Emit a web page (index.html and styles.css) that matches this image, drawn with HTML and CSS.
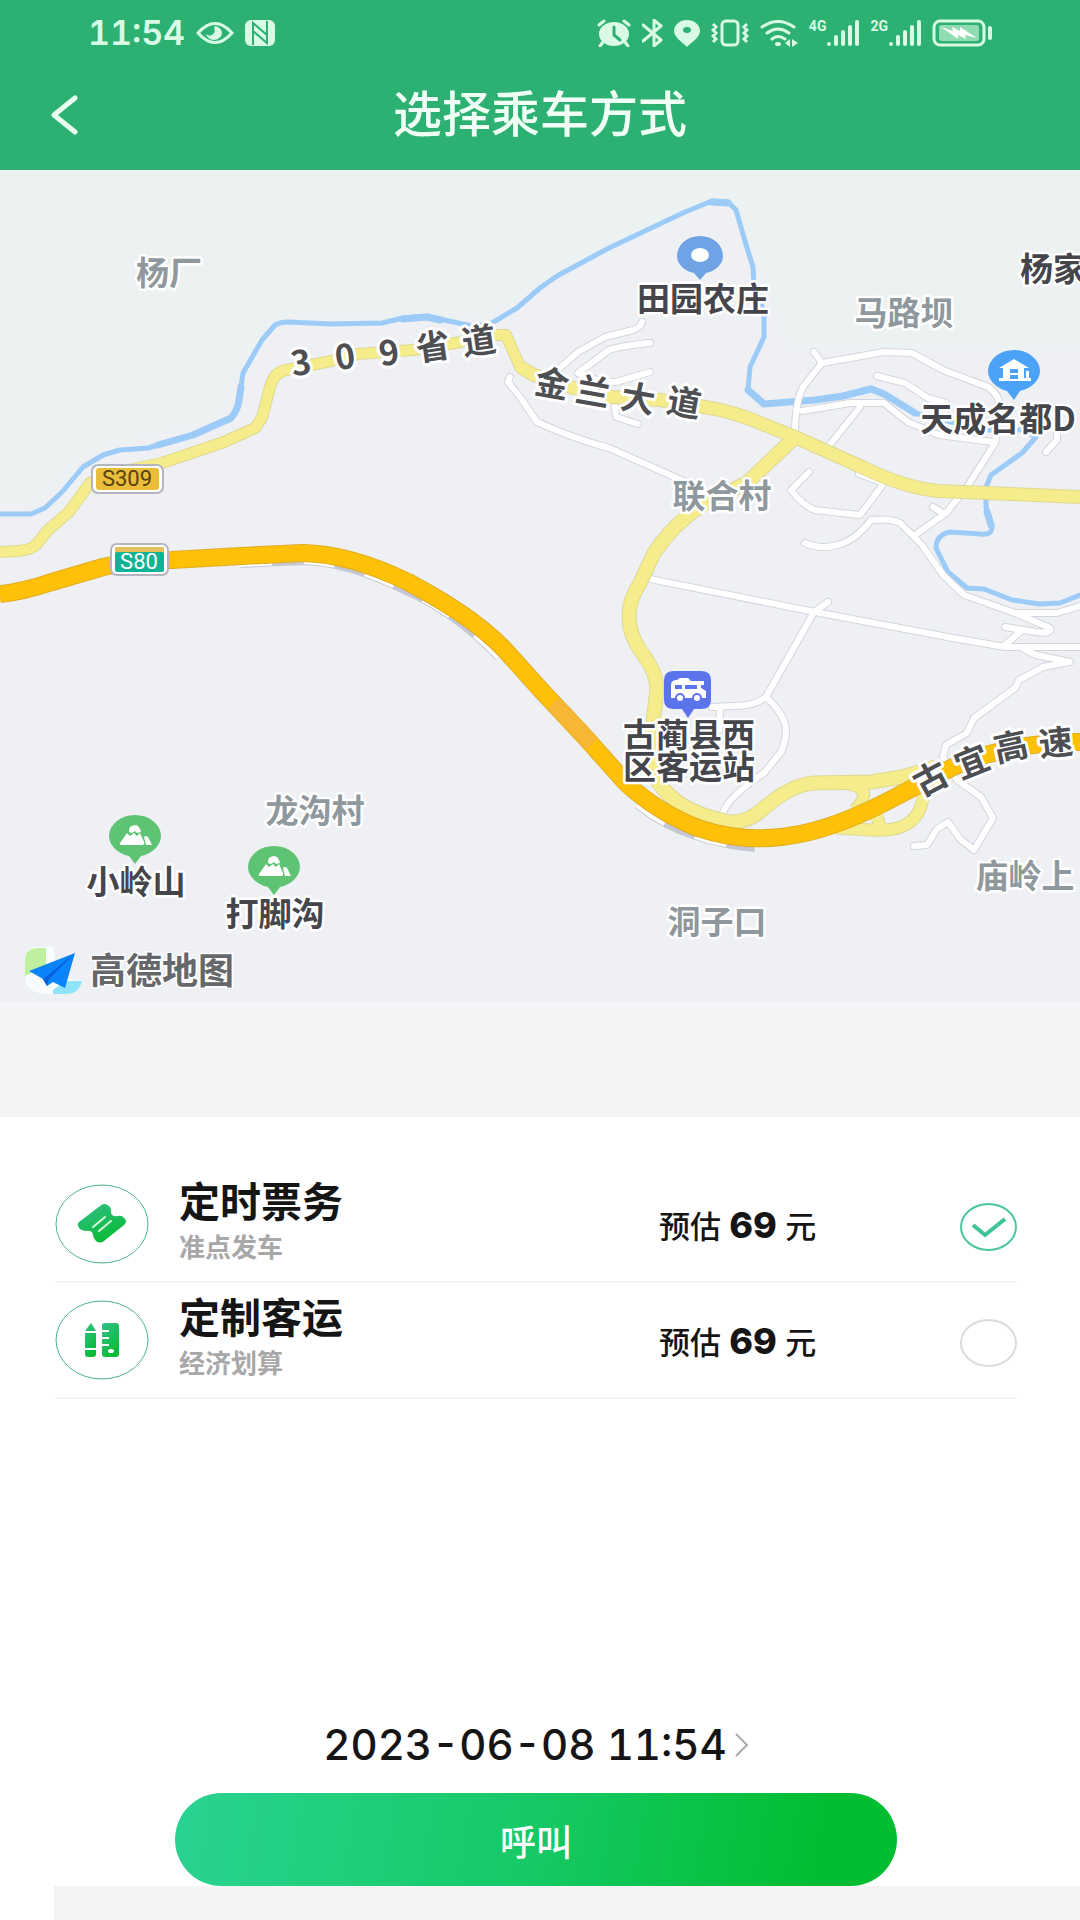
FILE: index.html
```html
<!DOCTYPE html>
<html lang="zh-CN">
<head>
  <meta charset="UTF-8" />
  <meta name="viewport" content="width=device-width, initial-scale=1.0"/>
  <title>选择乘车方式</title>
  <link rel="stylesheet" href="styles.css">
</head>
<body>
  <!-- Header -->
  <header class="header">
    <div class="status-bar">
      <div class="status-left">
        <span class="clock">11:54</span>
        <svg width="38" height="22" viewBox="0 0 38 22"><path d="M2 11Q19-8 36 11Q19 30 2 11Z" fill="none" stroke="#d9fbe5" stroke-width="3"/><path d="M19 4a8 7 0 1 1-9 8q4 3 7 0t1-6z" fill="#d9fbe5"/></svg>
        <svg width="30" height="26" viewBox="0 0 30 26"><rect width="30" height="26" rx="6" fill="#d9fbe5"/><path d="M8 25V3l14 12V7M22 1v22L8 11v8" fill="none" stroke="#2cb172" stroke-width="2"/></svg>
      </div>
      <div class="status-right">
        <!-- alarm -->
        <svg width="34" height="28" viewBox="0 0 34 28"><ellipse cx="17" cy="15" rx="15" ry="12" fill="#d9fbe5"/><path d="M2 6l5-4M32 6l-5-4M6 23l-3 4M28 23l3 4" stroke="#d9fbe5" stroke-width="3" stroke-linecap="round"/><path d="M17 8v8l6 5" fill="none" stroke="#2cb172" stroke-width="3" stroke-linecap="round"/></svg>
        <!-- bluetooth -->
        <svg width="21" height="28" viewBox="0 0 21 28"><path d="M1 6l18 15-7 6V1l7 6L1 22" fill="none" stroke="#d9fbe5" stroke-width="3" stroke-linejoin="round" stroke-linecap="round"/></svg>
        <!-- location -->
        <svg width="26" height="28" viewBox="0 0 26 28"><path d="M13 28C8 23 0 18 0 12a13 11 0 0 1 26 0c0 6-8 11-13 16z" fill="#d9fbe5"/><ellipse cx="13" cy="11" rx="4" ry="3" fill="#2cb172"/></svg>
        <!-- vibrate -->
        <svg width="38" height="28" viewBox="0 0 38 28"><rect x="11" y="2" width="16" height="24" rx="4" fill="none" stroke="#d9fbe5" stroke-width="3"/><path d="M2 5l3 3-3 3 3 3-3 3 3 3-3 3M36 5l-3 3 3 3-3 3 3 3-3 3 3 3" fill="none" stroke="#d9fbe5" stroke-width="3"/></svg>
        <!-- wifi -->
        <svg width="38" height="28" viewBox="0 0 38 28"><path d="M2 8q16-11 32 0M7 14q11-8 22 0M12 20q6-5 13 0" fill="none" stroke="#d9fbe5" stroke-width="3" stroke-linecap="round"/><ellipse cx="18" cy="25" rx="3" ry="2" fill="#d9fbe5"/><path d="M30 20v8l-5-4zM32 20v8l6-4z" fill="#d9fbe5"/></svg>
        <span class="signal"><small>4G</small>
          <svg width="33" height="28" viewBox="0 0 33 28"><path d="M3 25v0M10 18v7M17 13v12M24 8v17M31 3v22" stroke="#d9fbe5" stroke-width="4" stroke-linecap="round"/></svg>
        </span>
        <span class="signal"><small>2G</small>
          <svg width="33" height="28" viewBox="0 0 33 28"><path d="M3 25v0M10 18v7M17 13v12M24 8v17M31 3v22" stroke="#d9fbe5" stroke-width="4" stroke-linecap="round"/></svg>
        </span>
        <!-- battery -->
        <svg width="60" height="28" viewBox="0 0 60 28"><rect x="2" y="2" width="50" height="24" rx="6" fill="none" stroke="#d9fbe5" stroke-width="3"/><rect x="7" y="6" width="40" height="16" rx="2" fill="#8edcaf"/><path d="M9 8l12 4-1-4 8 4v-4l17 11-12-3 1 4-8-4v4z" fill="#fff"/><path d="M58 9v10" stroke="#d9fbe5" stroke-width="4" stroke-linecap="round"/></svg>
      </div>
    </div>
    <div class="title-bar">
      <button class="back-btn" type="button" aria-label="返回">
        <svg width="27" height="40" viewBox="0 0 27 40"><path d="M24 3L3 20L24 37" fill="none" stroke="#e9fff0" stroke-width="5" stroke-linecap="round" stroke-linejoin="round"/></svg>
      </button>
      <h1>选择乘车方式</h1>
    </div>
  </header>

  <!-- Map -->
  <section class="map">
    <svg viewBox="0 170 1080 832" role="img" aria-label="高德地图">
      <defs>
        <g id="mountain-pin">
          <path d="M0 28L-6 20C-17 18-26 9-26 0A26 21 0 0 1 26 0C26 9 17 18 6 20Z" fill="#5ec474"/>
          <path d="M-6-4Q-6-10-3-10Q0-12 3-10Q5-8 6-4L2-3L0-5L-3-3ZM-15 7L-8-3L-5 0L-1-3L2 0L5-3L9 6Q10 9 7 9H-13Q-16 9-15 7ZM9 1Q11-1 13 1L17 9H11Z" fill="#fff"/>
        </g>
        <g id="local-roads">
          <path d="M510 377L508 382L520 397L537 422Q572 438 609 448L643 463L690 484"/>
          <path d="M561 367L578 352L605 337L633 330Q641 327 642 322"/>
          <path d="M578 373L609 350Q620 346 650 343M578 373Q600 383 616 382L650 372"/>
          <path d="M614 400L616 417L638 424"/>
          <path d="M814 352L822 363L803 387Q795 402 795 436"/>
          <path d="M822 363L884 352L912 353L943 370L988 387Q1002 397 1000 412T995 443L967 487L946 513L915 535"/>
          <path d="M877 376L905 383L928 398L946 403"/>
          <path d="M802 411L850 403L884 403L908 422L939 435L993 442"/>
          <path d="M860 407L828 447M859 474L884 483L860 515L815 510Q802 505 791 490L809 472"/>
          <path d="M805 543Q820 550 838 545T871 520Q890 518 900 523L922 545L943 575L964 595L1015 613L1050 628Q1053 634 1036 632L1005 627"/>
          <path d="M1015 613L1057 613L1080 606M933 507L941 512M1057 433L1057 440L1046 452"/>
          <path d="M650 579L815 612L953 638L1005 647L1080 647"/>
          <path d="M828 602L814 612L766 697Q755 706 735 706L712 707M720 708L719 730"/>
          <path d="M766 697Q782 712 785 724T781 752L764 773Q728 797 723 813"/>
          <path d="M1020 632L1005 645M1022 648L1036 655L1070 662L1043 667L1019 680L1015 688L974 718L967 733L946 745L943 757L957 780L981 797L993 818L974 850L960 839L948 822L937 829L927 845L914 846"/>
        </g>
        <path id="s309-west" d="M0 552L17 551Q32 550 37 544L48 530L69 512L90 483L110 474L162 463L224 442L255 428L262 418L270 387Q274 372 286 370L331 361L358 354L413 350L461 342L482 335L506 335L520 367L534 375"/>
        <path id="s309-east" d="M520 367L534 375L574 388L612 397L660 400L705 407Q735 412 760 423L795 437L864 468Q905 488 939 491L988 493L1080 497"/>
        <path id="village-road" d="M795 437L747 483L705 503Q674 523 654 553L640 583Q629 600 629 616Q629 634 640 650Q657 672 657 690L652 730V767Q656 785 675 800T730 822Q748 823 764 808Q792 784 815 783L871 782L902 777L936 767"/>
        <path id="ramps" d="M840 783Q878 786 855 810M836 828L871 830Q897 832 910 822T924 790M875 811L880 826"/>
        <path id="railway" d="M240 560L303 557Q348 558 405 586C441 601 474 626 501 654M640 802Q665 822 696 832Q726 842 755 844"/>
        <path id="expressway" d="M0 594Q22 592 52 582L103 567Q130 561 172 560L241 556L303 553Q350 554 408 582C445 602 478 622 505 650L540 689L585 737L626 783Q657 812 698 828Q748 845 800 834Q836 827 884 803L953 767Q1010 742 1080 742"/>
      </defs>

      <rect y="170" width="1080" height="832" fill="#eef0f4"/>
      <path d="M0 170H1080V350H790L750 245L725 196L545 280L490 320L290 315L235 375L220 420L90 452L35 505H0Z" fill="#ecf1f2"/>

      <!-- river -->
      <g class="river">
        <path stroke-width="5" d="M0 514H31L45 508L62 492L83 467L103 455L120 450L148 448L193 435L231 418Q238 410 239 400L243 373L262 340L275 325Q280 322 289 322L331 324L382 323L403 318L427 316L444 320L472 326L492 323L517 308L540 288L557 276L609 248L685 212L712 201L728 202L736 210L747 248L753 267L754 283L764 313L764 337L750 367L748 390L764 404L815 400L843 396L871 388L884 393L915 413L984 430H1022L1036 437L1022 453L991 475L986 487V507L992 525Q993 536 980 534L950 532Q936 535 936 548L948 572L967 588L984 589L1012 600L1039 604L1060 603L1080 595"/>
        <path stroke-width="7" d="M158 445L193 435L231 418Q238 410 239 400L241 387M403 319L427 317L440 320M712 202L728 203M748 390L764 404L815 400L843 396L871 389L884 394L915 413M987 512L991 525"/>
      </g>

      <!-- roads, casing first -->
      <use href="#local-roads" class="road local-casing"/>
      <use href="#local-roads" class="road local"/>
      <g class="road yellow-casing">
        <use href="#s309-west" stroke-width="12"/>
        <use href="#s309-east" stroke-width="14"/>
        <use href="#village-road" stroke-width="15"/>
        <use href="#ramps" stroke-width="13"/>
      </g>
      <g class="road yellow">
        <use href="#s309-west" stroke-width="10"/>
        <use href="#s309-east" stroke-width="12"/>
        <use href="#village-road" stroke-width="13"/>
        <use href="#ramps" stroke-width="11"/>
      </g>
      <use href="#railway" class="rail"/>
      <use href="#railway" class="rail-dash"/>
      <use href="#expressway" class="road" stroke="#e0ac22" stroke-width="18"/>
      <use href="#expressway" class="road" stroke="#ffc107" stroke-width="16"/>
      <path d="M553 703L592 744" stroke="#f7b735" stroke-width="16"/>

      <!-- road shields -->
      <rect x="92" y="465" width="71" height="28" rx="6" fill="#fff" stroke="#b4b5c0" stroke-width="2"/>
      <rect x="96" y="468" width="63" height="22" rx="3" fill="#eabd3b"/>
      <text class="shield" x="127" y="486" fill="#59420e">S309</text>
      <rect x="111" y="544" width="57" height="31" rx="6" fill="#fff" stroke="#b4b5c0" stroke-width="2"/>
      <rect x="115" y="547" width="49" height="6" fill="#e5c15e"/>
      <rect x="115" y="552" width="49" height="20" rx="2" fill="#0fb295"/>
      <text class="shield" x="139" y="569" fill="#fff">S80</text>

      <!-- road names -->
      <g class="road-name">
        <text y="12" transform="translate(301 363) rotate(-8)">3</text>
        <text y="12" transform="translate(345 357) rotate(-8)">0</text>
        <text y="12" transform="translate(389 353) rotate(-8)">9</text>
        <text y="12" transform="translate(433 347) rotate(-8)">省</text>
        <text y="12" transform="translate(479 341) rotate(-8)">道</text>
        <text y="12" transform="translate(552 384) rotate(10)">金</text>
        <text y="12" transform="translate(593 392) rotate(10)">兰</text>
        <text y="12" transform="translate(638 399) rotate(10)">大</text>
        <text y="12" transform="translate(684 403) rotate(10)">道</text>
        <text y="12" transform="translate(931 779) rotate(-28)">古</text>
        <text y="12" transform="translate(972 762) rotate(-22)">宜</text>
        <text y="12" transform="translate(1011 747) rotate(-12)">高</text>
        <text y="12" transform="translate(1056 743) rotate(-6)">速</text>
      </g>

      <!-- village names -->
      <g class="place village">
        <text x="169" y="285">杨厂</text>
        <text x="904" y="325">马路坝</text>
        <text x="722" y="508">联合村</text>
        <text x="315" y="823">龙沟村</text>
        <text x="717" y="934">洞子口</text>
        <text x="1025" y="888">庙岭上</text>
      </g>

      <!-- points of interest -->
      <g class="place">
        <text x="703" y="311">田园农庄</text>
        <text x="1053" y="281">杨家</text>
        <text x="998" y="431">天成名都D</text>
        <text x="689" y="747">古蔺县西</text>
        <text x="689" y="779">区客运站</text>
        <text x="136" y="894">小岭山</text>
        <text x="275" y="926">打脚沟</text>
      </g>

      <path d="M700 280L694 273C684 271 677 264 677 256A23 20 0 0 1 723 256C723 264 716 271 706 273Z" fill="#6fa3e5"/>
      <ellipse cx="700" cy="255" rx="9" ry="7" fill="#fff"/>

      <path d="M1014 400L1007 391C996 388 988 380 988 371A26 21 0 0 1 1040 371C1040 380 1032 388 1020 391Z" fill="#4ba2f7"/>
      <path d="M999 368L1014 359L1029 368H1024V378H1026V371H1029V378H1031V381H999V378H1003V368Z" fill="#fff"/>
      <path d="M1010 369H1018V373H1010ZM1010 375H1018V379H1010Z" fill="#4ba2f7"/>

      <path d="M674 671H701Q711 671 711 680V700Q711 709 701 709H694L688 718L682 709H674Q664 709 664 700V680Q664 671 674 671Z" fill="#5b74ec"/>
      <path d="M671 685Q671 680 677 680L680 678H688L691 681H704V685H701V688L706 691V698H671Z" fill="#fff"/>
      <path d="M675 685H682V689H675ZM685 685H697V689H685Z" fill="#5b74ec"/>
      <g fill="#fff" stroke="#5b74ec" stroke-width="2"><ellipse cx="680" cy="698" rx="4" ry="4"/><ellipse cx="697" cy="698" rx="4" ry="4"/></g>

      <use href="#mountain-pin" x="135" y="836"/>
      <use href="#mountain-pin" x="274" y="867"/>

      <!-- map provider -->
      <path d="M25 976V960Q25 947 38 947H54Q54 980 82 981Q79 994 66 994H49Q25 994 25 976Z" fill="#f8fcfe"/>
      <path d="M25 976V960Q25 948 38 948H46V966Z" fill="#bff0a0"/>
      <path d="M53 990L66 981H82Q79 994 66 994H53Z" fill="#8ee4fb"/>
      <path d="M29 971L75 953L65 988L53 982L47 986L43 979Z" fill="#0a84fb"/>
      <path d="M43 979L75 953L49 979L47 986Z" fill="#0560dd"/>
      <text class="map-brand" x="90" y="984">高德地图</text>
    </svg>
  </section>

  <!-- Ride options -->
  <main class="panel">
    <form class="ride-form">
      <label class="ride">
        <svg class="ride-icon" viewBox="0 0 94 80">
          <defs><linearGradient id="green" x1="0" y1="0" x2="0.5" y2="1"><stop offset="0" stop-color="#35bf8c"/><stop offset="1" stop-color="#09bb36"/></linearGradient></defs>
          <ellipse cx="47" cy="40" rx="46" ry="39" fill="none" stroke="#4bb583" stroke-width="1"/>
          <path d="M24 38L45 22Q49 18 54 22Q57 25 56 28Q56 33 63 32Q67 31 69 34Q73 37 69 41L49 57Q45 60 41 57Q38 54 38 51Q37 46 31 47Q28 47 25 45Q21 41 24 38Z" fill="url(#green)"/>
          <path d="M38 43L50 33M44 47L56 37" stroke="#d5f8df" stroke-width="2" stroke-linecap="round"/>
        </svg>
        <span class="ride-text"><b>定时票务</b><small>准点发车</small></span>
        <span class="price">预估 <strong>69</strong> 元</span>
        <span class="radio">
          <input type="radio" name="ride" checked>
          <svg viewBox="0 0 57 48"><path d="M13 22L25 32L45 16" fill="none" stroke="#3ec593" stroke-width="4"/></svg>
        </span>
      </label>
      <label class="ride">
        <svg class="ride-icon" viewBox="0 0 94 80">
          <ellipse cx="47" cy="40" rx="46" ry="39" fill="none" stroke="#4bb583" stroke-width="1"/>
          <path d="M30 31L36 23L41 31ZM30 33H41V48H30ZM30 50H41V54Q41 57 38 57H33Q30 57 30 54Z" fill="url(#green)"/>
          <path d="M47 25Q47 23 50 23H61Q64 23 64 26V54Q64 57 61 57H50Q47 57 47 54V46H54V44H47V39H54V37H47V32H54V30H47Z" fill="url(#green)"/>
          <ellipse cx="56" cy="51" rx="3" ry="2" fill="#fff"/>
        </svg>
        <span class="ride-text"><b>定制客运</b><small>经济划算</small></span>
        <span class="price">预估 <strong>69</strong> 元</span>
        <span class="radio">
          <input type="radio" name="ride">
          <svg viewBox="0 0 57 48"><path d="M13 22L25 32L45 16" fill="none" stroke="#3ec593" stroke-width="4"/></svg>
        </span>
      </label>

      <div class="booking">
        <button class="time-btn" type="button">2023-06-08 11:54
          <svg width="14" height="24" viewBox="0 0 14 24"><path d="M1 1L12 12L1 23" fill="none" stroke="#aaa" stroke-width="2"/></svg>
        </button>
        <button class="call-btn" type="submit">呼叫</button>
      </div>
    </form>
  </main>
  <footer class="bottom-strip"></footer>
</body>
</html>
```
FILE: styles.css
```css
/* GLOBAL */
* { box-sizing: border-box; margin: 0; padding: 0; }
body {
  min-height: 100vh;
  display: flex;
  flex-direction: column;
  background: #fff;
  color: #151515;
  font-family: Inter, 'Noto Sans CJK SC', sans-serif;
  overflow-x: hidden;
}
button {
  font-family: inherit;
  border: none;
  background: none;
  cursor: pointer;
}
svg { display: block; flex-shrink: 0; }

/* HEADER */
.header {
  background: #2cb172;
  color: #f0fff5;
}
.status-bar {
  display: flex;
  align-items: center;
  justify-content: space-between;
  height: 66px;
  padding: 0 88px;
  color: #d9fbe5;
}
.status-left, .status-right {
  display: flex;
  align-items: center;
  gap: 11px;
}
.clock {
  font-size: 34px;
  font-weight: 600;
  line-height: 40px;
  font-variant-numeric: tabular-nums;
}
.signal { display: flex; }
.signal small {
  font-family: Roboto, sans-serif;
  font-size: 14px;
  font-weight: 700;
  line-height: 14px;
}
.title-bar {
  display: grid;
  grid-template-columns: 128px 1fr 128px;
  align-items: center;
  height: 104px;
  padding-bottom: 6px;
}
.back-btn { padding: 12px 0 12px 51px; }
.title-bar h1 {
  font-size: 49px;
  font-weight: 500;
  line-height: 64px;
  text-align: center;
}

/* MAP */
.map {
  background: #eef0f4;
  border-bottom: 115px solid #f4f4f6;
}
.map svg { width: 100%; height: auto; }
.river {
  fill: none;
  stroke: #9ccbf8;
  stroke-linecap: round;
  stroke-linejoin: round;
}
.road {
  fill: none;
  stroke-linejoin: round;
}
.local-casing {
  stroke: #d3d6de;
  stroke-width: 8px;
  stroke-linecap: round;
}
.local {
  stroke: #fff;
  stroke-width: 6px;
  stroke-linecap: round;
}
.yellow-casing { stroke: #ded992; }
.yellow { stroke: #f5ec8c; }
.rail {
  fill: none;
  stroke: #c5c8d4;
  stroke-width: 16px;
}
.rail-dash {
  fill: none;
  stroke: #fff;
  stroke-width: 14px;
  stroke-dasharray: 32 32;
}
.road-name, .place, .map-brand {
  font-family: 'Noto Sans CJK SC', sans-serif;
  font-weight: 700;
  stroke: #fff;
  stroke-linejoin: round;
  paint-order: stroke;
}
.road-name {
  font-size: 34px;
  text-anchor: middle;
  fill: #4e4f53;
  stroke-width: 6px;
}
.place {
  font-size: 33px;
  text-anchor: middle;
  fill: #45464b;
  stroke-width: 5px;
}
.village { fill: #8f989d; }
.shield {
  font-family: Roboto, sans-serif;
  font-size: 22px;
  text-anchor: middle;
}
.map-brand {
  font-size: 36px;
  fill: #66676b;
  stroke-width: 3px;
}

/* RIDE LIST */
.panel {
  flex: 1;
  display: flex;
  padding: 50px 63px 0 55px;
}
.ride-form {
  flex: 1;
  display: flex;
  flex-direction: column;
}
.ride {
  display: grid;
  grid-template-columns: 94px 1fr 271px 57px;
  align-items: center;
  column-gap: 30px;
  height: 116px;
  border-bottom: 2px solid #f2f3f5;
  cursor: pointer;
}
.ride-icon { width: 94px; height: 80px; }
.ride-text {
  display: flex;
  flex-direction: column;
}
.ride-text b {
  font-size: 41px;
  font-weight: 700;
  line-height: 48px;
}
.ride-text small {
  font-size: 26px;
  font-weight: 700;
  line-height: 44px;
  color: #a8a8a8;
}
.price {
  margin-top: 4px;
  font-size: 31px;
  font-weight: 500;
  line-height: 40px;
  white-space: nowrap;
}
.price strong {
  font-size: 36px;
  font-weight: 800;
}
.radio {
  position: relative;
  width: 57px;
  height: 48px;
  margin-top: 6px;
}
.radio input {
  display: block;
  appearance: none;
  width: 57px;
  height: 48px;
  border: 2px solid #dcdcdc;
  border-radius: 50%;
}
.radio input:checked { border-color: #4bc79a; }
.radio svg {
  position: absolute;
  inset: 0;
  display: none;
}
.radio input:checked + svg { display: block; }

/* BOOKING */
.booking {
  display: flex;
  flex-direction: column;
  align-items: center;
  margin-top: auto;
}
.time-btn {
  display: flex;
  align-items: center;
  gap: 8px;
  margin-bottom: 20px;
  font-size: 42px;
  font-weight: 500;
  line-height: 56px;
  font-variant-numeric: tabular-nums;
  color: #151515;
}
.call-btn {
  width: 75%;
  height: 93px;
  border-radius: 47px;
  background: linear-gradient(100deg, #2ad391, #16c965 50%, #02bd32 88%);
  color: #fff;
  font-size: 36px;
  font-weight: 500;
}
.bottom-strip {
  height: 34px;
  margin-left: 54px;
  background: #f4f4f4;
}
```
